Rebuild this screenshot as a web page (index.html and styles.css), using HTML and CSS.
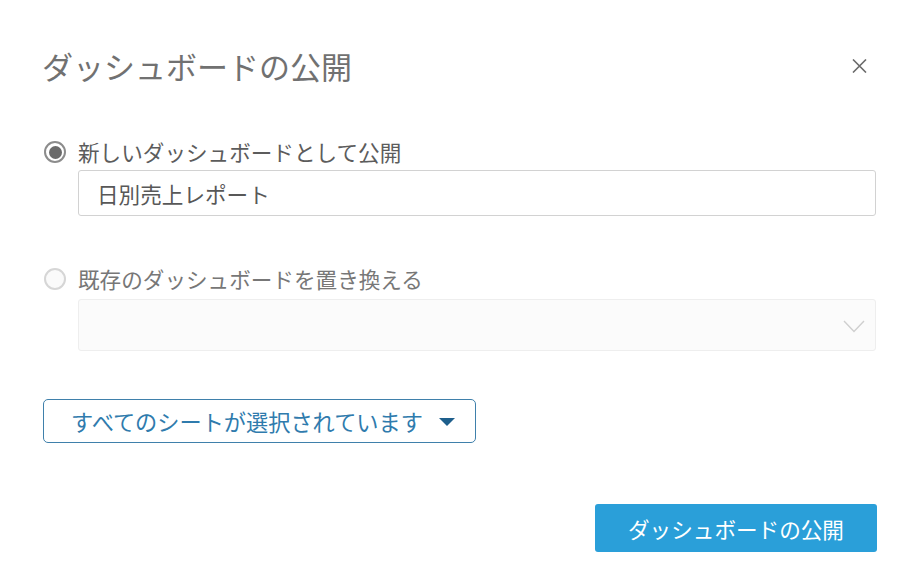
FILE: index.html
```html
<!DOCTYPE html>
<html lang="ja">
<head>
<meta charset="utf-8">
<title>ダッシュボードの公開</title>
<link rel="stylesheet" href="styles.css">
</head>
<body>
<div class="dialog">
  <div class="header">
    <h1 class="title">ダッシュボードの公開</h1>
    <button class="close" aria-label="閉じる">
      <svg width="15" height="14" viewBox="0 0 15 14"><path d="M1 0.5L14 13.5M14 0.5L1 13.5" stroke="#6a6a6a" stroke-width="1.6" fill="none"/></svg>
    </button>
  </div>

  <div class="option">
    <span class="radio checked"></span>
    <span class="label">新しいダッシュボードとして公開</span>
  </div>
  <div class="field input">日別売上レポート</div>

  <div class="option option-2">
    <span class="radio"></span>
    <span class="label disabled">既存のダッシュボードを置き換える</span>
  </div>
  <div class="field select">
    <svg class="chevron" width="22" height="13" viewBox="0 0 22 13"><path d="M1 1L11 11.5L21 1" stroke="#cfcfcf" stroke-width="1.4" fill="none"/></svg>
  </div>

  <button class="sheets">
    <span>すべてのシートが選択されています</span>
    <svg width="16" height="8" viewBox="0 0 16 8"><path d="M0 0H16L8 8Z" fill="#1e5f8c"/></svg>
  </button>

  <div class="footer">
    <button class="publish">ダッシュボードの公開</button>
  </div>
</div>
</body>
</html>
```

FILE: styles.css
```css
* { box-sizing: border-box; }
html, body {
  margin: 0;
  padding: 0;
  background: #ffffff;
}
body {
  font-family: "Noto Sans CJK JP", "Noto Sans", sans-serif;
  color: #5a5a5a;
}
.dialog {
  width: 922px;
  height: 571px;
  padding: 46px 46px 0 42px;
}
.header {
  display: flex;
  justify-content: space-between;
  align-items: center;
  height: 40px;
}
.title {
  margin: 0;
  font-size: 31px;
  line-height: 40px;
  font-weight: 400;
  color: #717171;
}
.close {
  border: 0;
  background: none;
  padding: 0;
  margin-right: 9px;
  width: 15px;
  height: 14px;
  display: flex;
}
.option {
  display: flex;
  align-items: center;
  gap: 12px;
  height: 24px;
  margin-top: 54px;
  margin-left: 2px;
}
.option-2 {
  margin-top: 51px;
}
.radio {
  width: 22px;
  height: 22px;
  border-radius: 50%;
  border: 2px solid #d6d6d6;
  background: #fafafa;
  display: flex;
  align-items: center;
  justify-content: center;
  flex: none;
}
.radio.checked {
  border-color: #8c8c8c;
  background: #fff;
}
.radio.checked::after {
  content: "";
  width: 13px;
  height: 13px;
  border-radius: 50%;
  background: #6a6a6a;
}
.label {
  font-size: 21.6px;
  line-height: 24px;
  color: #5c5c5c;
}
.label.disabled {
  color: #777777;
}
.field {
  margin-left: 36px;
  border-radius: 3px;
}
.input {
  margin-top: 6px;
  height: 46px;
  border: 1.5px solid #d2d2d2;
  padding: 0 18px;
  display: flex;
  align-items: center;
  font-size: 21.6px;
  color: #585858;
}
.select {
  margin-top: 8px;
  height: 52px;
  border: 1px solid #eeeeee;
  background: #fbfbfb;
  display: flex;
  align-items: center;
  justify-content: flex-end;
  padding-right: 10px;
}
.chevron {
  margin-top: 2px;
}
.sheets {
  margin-top: 48px;
  margin-left: 1px;
  height: 44px;
  width: 433px;
  display: flex;
  align-items: center;
  gap: 16px;
  padding: 0 15px 0 27px;
  border: 1.5px solid #3f80ab;
  border-radius: 5px;
  background: #fff;
  font-family: inherit;
  font-size: 22.2px;
  color: #2f7bad;
}
.sheets span {
  white-space: nowrap;
}
.sheets svg {
  margin-top: 1px;
  flex: none;
}
.footer {
  display: flex;
  justify-content: flex-end;
  margin-top: 61px;
  margin-right: -1px;
}
.publish {
  width: 282px;
  height: 48px;
  border: 0;
  border-radius: 3px;
  background: #2a9fd9;
  color: #ffffff;
  font-family: inherit;
  font-size: 21.6px;
  padding: 0;
}
```
